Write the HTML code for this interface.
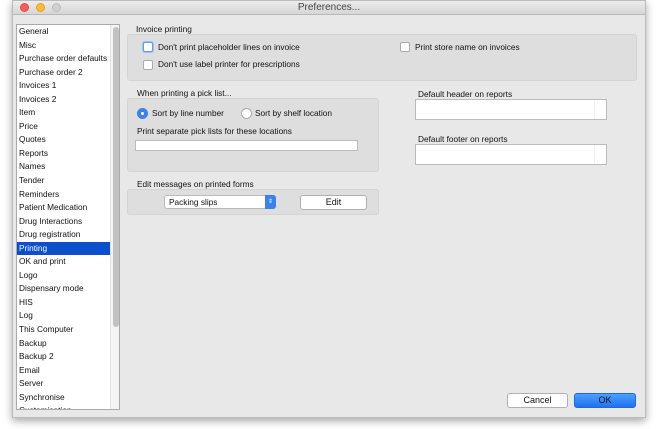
<!DOCTYPE html>
<html><head><style>
*{margin:0;padding:0;box-sizing:border-box}
body{width:656px;height:429px;background:#fff;font-family:"Liberation Sans",sans-serif;font-size:8.3px;color:#111;position:relative;overflow:hidden}
.win{position:absolute;left:12px;top:0;width:634px;height:418px;background:#e8e8e8;box-shadow:0 3px 8px rgba(0,0,0,.35);border:1px solid #bbb}
.title{position:absolute;left:0;top:0;width:100%;height:14px;background:linear-gradient(#ececec,#d6d6d6);border-bottom:1px solid #b8b8b8;text-align:center;font-size:10px;line-height:14px;color:#444}
.dot{position:absolute;top:2px;width:9px;height:9px;border-radius:50%}
.a{position:absolute}
.list{position:absolute;left:3px;top:23px;width:104px;height:386px;background:#fff;border:1px solid #aaa;overflow:hidden}
.list .it{height:13.55px;line-height:13.5px;padding-left:2px;white-space:nowrap}
.sel{background:#0b4fcf;color:#fff}
.sb{position:absolute;left:93px;top:0;width:10px;height:100%;background:#f4f4f4;border-left:1px solid #e0e0e0}
.thumb{position:absolute;left:2px;top:2px;width:6px;height:300px;background:#c2c2c2;border-radius:3px}
.box{position:absolute;background:#dedede;border:1px solid #d4d4d4;border-radius:3px}
.cb{position:absolute;width:10px;height:10px;background:#fff;border:1px solid #aaa;border-radius:2px}
.field{position:absolute;background:#fff;border:1px solid #bbb}
.btn{position:absolute;background:#fff;border:1px solid #b0b0b0;border-radius:3px;text-align:center;font-size:9px;line-height:13px}
</style></head><body>
<div class="win">
<div class="title">Preferences...</div>
<div class="dot" style="left:7px;background:#fc5b57;border:1px solid #de4a44"></div>
<div class="dot" style="left:23px;background:#fdbc2e;border:1px solid #dea124"></div>
<div class="dot" style="left:39px;background:#d0d0d0;border:1px solid #bbb"></div>
<div class="list">
<div class="it">General</div><div class="it">Misc</div><div class="it">Purchase order defaults</div><div class="it">Purchase order 2</div><div class="it">Invoices 1</div><div class="it">Invoices 2</div><div class="it">Item</div><div class="it">Price</div><div class="it">Quotes</div><div class="it">Reports</div><div class="it">Names</div><div class="it">Tender</div><div class="it">Reminders</div><div class="it">Patient Medication</div><div class="it">Drug Interactions</div><div class="it">Drug registration</div><div class="it sel">Printing</div><div class="it">OK and print</div><div class="it">Logo</div><div class="it">Dispensary mode</div><div class="it">HIS</div><div class="it">Log</div><div class="it">This Computer</div><div class="it">Backup</div><div class="it">Backup 2</div><div class="it">Email</div><div class="it">Server</div><div class="it">Synchronise</div><div class="it">Customisation</div>
<div class="sb"><div class="thumb"></div></div>
</div>
<div class="a" style="left:123px;top:23px">Invoice printing</div>
<div class="box" style="left:114px;top:33px;width:510px;height:47px"></div>
<div class="cb" style="left:130px;top:41px;border-color:#6b9be8;box-shadow:0 0 0 1px #9cc0f4"></div>
<div class="a" style="left:145px;top:41px">Don't print placeholder lines on invoice</div>
<div class="cb" style="left:130px;top:59px"></div>
<div class="a" style="left:145px;top:58px">Don't use label printer for prescriptions</div>
<div class="cb" style="left:387px;top:41px"></div>
<div class="a" style="left:402px;top:41px">Print store name on invoices</div>
<div class="a" style="left:124px;top:87px">When printing a pick list...</div>
<div class="box" style="left:114px;top:97px;width:252px;height:74px"></div>
<div class="a" style="left:124px;top:107px;width:11px;height:11px;border-radius:50%;background:#3b82ee"><div style="position:absolute;left:4px;top:4px;width:3px;height:3px;border-radius:50%;background:#fff"></div></div>
<div class="a" style="left:139px;top:107px">Sort by line number</div>
<div class="a" style="left:228px;top:107px;width:11px;height:11px;border-radius:50%;background:#fff;border:1px solid #aaa"></div>
<div class="a" style="left:242px;top:107px">Sort by shelf location</div>
<div class="a" style="left:124px;top:125px">Print separate pick lists for these locations</div>
<div class="field" style="left:122px;top:139px;width:223px;height:11px"></div>
<div class="a" style="left:124px;top:178px">Edit messages on printed forms</div>
<div class="box" style="left:114px;top:188px;width:252px;height:26px"></div>
<div class="a" style="left:151px;top:194px;width:112px;height:14px;background:#fff;border:1px solid #bbb;border-radius:3px;padding-left:4px;line-height:12px">Packing slips<div style="position:absolute;right:-1px;top:-1px;width:11px;height:14px;background:#3a82f0;border-radius:0 3px 3px 0;color:#fff;font-size:6px;text-align:center;line-height:14px">⇕</div></div>
<div class="btn" style="left:287px;top:194px;width:67px;height:15px">Edit</div>
<div class="a" style="left:405px;top:88px">Default header on reports</div>
<div class="field" style="left:402px;top:98px;width:192px;height:21px"><div style="position:absolute;right:0;top:0;width:12px;height:100%;border-left:1px solid #eee"></div></div>
<div class="a" style="left:405px;top:133px">Default footer on reports</div>
<div class="field" style="left:402px;top:143px;width:192px;height:21px"><div style="position:absolute;right:0;top:0;width:12px;height:100%;border-left:1px solid #eee"></div></div>
<div class="btn" style="left:494px;top:392px;width:61px;height:15px">Cancel</div>
<div class="btn" style="left:561px;top:392px;width:62px;height:15px;background:linear-gradient(#4fa0fb,#1d72f0);border-color:#1d6ae0;color:#111">OK</div>
</div>
</body></html>
